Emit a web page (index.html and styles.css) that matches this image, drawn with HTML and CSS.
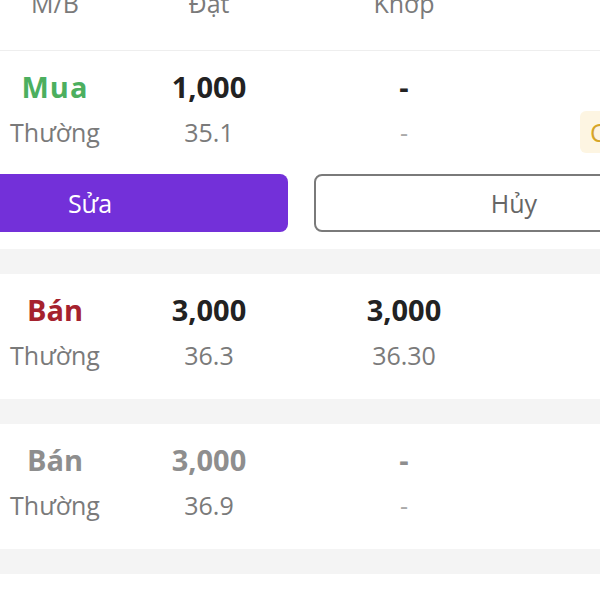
FILE: index.html
```html
<!DOCTYPE html>
<html lang="vi">

<head>
    <meta charset="UTF-8">
    <meta name="viewport" content="width=device-width, initial-scale=1.0">
    <title>Sổ lệnh</title>
    <link rel="stylesheet" href="styles.css">
</head>

<body>
    <div class="orders">
        <div class="orders-head">
            <span>M/B</span>
            <span>Đạt</span>
            <span>Khớp</span>
        </div>

        <div class="order">
            <div class="order-grid">
                <span class="side buy">Mua</span>
                <span class="qty">1,000</span>
                <span class="qty">-</span>
                <span></span>

                <span class="sub">Thường</span>
                <span class="sub">35.1</span>
                <span class="sub dash">-</span>
                <span class="status">Chờ khớp</span>
            </div>

            <div class="actions">
                <button class="btn btn-edit">Sửa</button>
                <button class="btn btn-cancel">Hủy</button>
            </div>
        </div>
        <div class="gap"></div>

        <div class="order order-matched">
            <div class="order-grid">
                <span class="side sell">Bán</span>
                <span class="qty">3,000</span>
                <span class="qty">3,000</span>
                <span></span>

                <span class="sub">Thường</span>
                <span class="sub">36.3</span>
                <span class="sub">36.30</span>
                <span></span>
            </div>
        </div>
        <div class="gap"></div>

        <div class="order order-done">
            <div class="order-grid">
                <span class="side">Bán</span>
                <span class="qty">3,000</span>
                <span class="qty">-</span>
                <span></span>

                <span class="sub">Thường</span>
                <span class="sub">36.9</span>
                <span class="sub dash">-</span>
                <span></span>
            </div>
        </div>
        <div class="gap"></div>
    </div>
</body>

</html>
```

FILE: styles.css
```css
body {
    margin: 0;
    background: #fff;
    font-family: 'Open Sans', 'Noto Sans', sans-serif;
    color: #222;
    overflow: hidden;
}

.orders {
    width: 600px;
}

.orders-head {
    display: grid;
    grid-template-columns: 110px 198px 192px 1fr;
    margin-top: -19px;
    padding-bottom: 25px;
    border-bottom: 1px solid #eeeeee;
    font-size: 25px;
    line-height: 44px;
    color: #7a7a7a;
    text-align: center;
}

.order {
    padding: 14px 0 17px;
}

.order-grid {
    display: grid;
    grid-template-columns: 110px 198px 192px 1fr;
    align-items: center;
    text-align: center;
}

.side,
.qty {
    font-size: 29px;
    font-weight: 700;
    line-height: 44px;
}

.side.buy {
    color: #4caf5f;
    letter-spacing: 1px;
}

.side.sell {
    color: #a5222e;
}

.sub {
    font-size: 25px;
    line-height: 46px;
    color: #7a7a7a;
}

.sub.dash {
    color: #aaa;
}

.order-done .side,
.order-done .qty {
    color: #8e8e8e;
}

.status {
    justify-self: start;
    margin-left: 80px;
    padding: 0 10px;
    border-radius: 6px;
    background: #fdf5e2;
    color: #d6a527;
    font-size: 25px;
    line-height: 42px;
    white-space: nowrap;
}

.actions {
    display: flex;
    gap: 26px;
    margin: 19px -114px 0 -108px;
}

.btn {
    flex: 1;
    height: 58px;
    border-radius: 8px;
    font-family: inherit;
    font-size: 25px;
}

.btn-edit {
    background: #7330d9;
    border: none;
    color: #fff;
}

.btn-cancel {
    background: #fff;
    border: 2px solid #7a7a7a;
    color: #666;
}

.order-matched {
    padding-bottom: 21px;
}

.order-done {
    padding-bottom: 21px;
}

.gap {
    height: 25px;
    background: #f4f4f4;
}
```
